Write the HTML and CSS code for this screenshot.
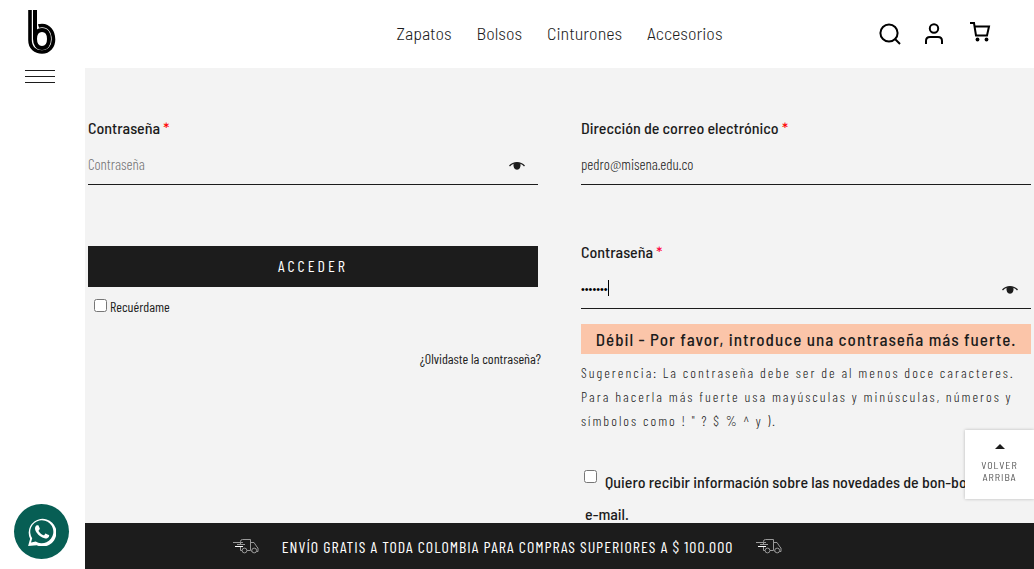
FILE: index.html
```html
<!DOCTYPE html>
<html lang="es">
<head>
<meta charset="utf-8">
<meta name="viewport" content="width=device-width, initial-scale=1">
<title>Mi cuenta</title>
<link rel="stylesheet" href="styles.css">
</head>
<body>
<svg class="defs" aria-hidden="true">
  <symbol id="eye" viewBox="0 0 16 10"><path d="M.5 5C4.500.5 11.500.5 15.500 5" fill="none" stroke="#1c1c1c" stroke-width="1.300"/><path d="M4.500 2.300Q8 1 11.500 2.300Q12 8.800 8 8.800T4.500 2.300Z" fill="#1c1c1c"/></symbol>
  <symbol id="truck" viewBox="0 0 26 16"><g fill="none" stroke="#999" stroke-width="1"><path d="M7.500 6V3.500Q7.500 1.500 9.500 1.500H17.500V12.500H14M7.500 8.500V12.500H9M17.500 4.500H21L24 9 25 10V13.500H23.500M18 13H19"/><circle cx="11.500" cy="12.500" r="2.400"/><circle cx="21.200" cy="12.500" r="2.400"/><path d="M0 4.500H10M4 6.500H12"/><path d="M2 8.500H10" stroke="#fff"/></g></symbol>
</svg>
<div class="page">
  <aside class="sidebar">
    <a class="logo" href="#" aria-label="Inicio">
      <svg width="28" height="46" viewBox="0 0 28 46"><path d="M2 1V31C2 39 7.500 43 14 43C21 43 25.500 37.500 25.500 30.500C25.500 22.500 21 16.500 14 16.500Q12 16.500 10.500 17" fill="none" stroke="#000" stroke-width="3.600"/><path d="M7 1V30C7 35.500 9.500 39 14 39C18.500 39 21 35.500 21 30C21 24.500 18.500 21 14 21C9.500 21 7 24.500 7 30" fill="none" stroke="#000" stroke-width="4"/></svg>
    </a>
    <button class="menu" type="button" aria-label="Menú"><span></span><span></span><span></span></button>
    <a class="whatsapp" href="#" aria-label="WhatsApp">
      <svg width="28" height="28" viewBox="0 0 24 24" fill="#fff"><path d="M.1 24l1.700-6.200A11.900 11.900 0 1 1 7.600 23.400zM6.600 20.200a9.900 9.900 0 1 0-3-2.900l-1 3.700zM17.500 14.400c-.3-.2-1.800-.9-2-1-.3-.1-.5-.1-.7.200l-.9 1.100c-.2.200-.4.200-.7.100-.3-.2-1.300-.5-2.400-1.500-.9-.8-1.500-1.800-1.700-2.100-.1-.3 0-.4.200-.6l.8-1.100c.1-.2 0-.4 0-.5L9.200 6.800c-.3-.7-.6-.6-.8-.6h-.6c-.2 0-.5.100-.8.400-.3.300-1 1-1 2.500s1.100 2.900 1.200 3.100c.1.200 2.100 3.200 5.100 4.500 3 1.200 3 .8 3.600.8.600-.1 1.800-.7 2-1.400.3-.7.300-1.300.2-1.400 0-.1-.3-.2-.6-.3z"/></svg>
    </a>
  </aside>
  <div class="shell">
    <header class="header">
      <span></span>
      <nav class="nav">
        <a href="#">Zapatos</a><a href="#">Bolsos</a><a href="#">Cinturones</a><a href="#">Accesorios</a>
      </nav>
      <div class="tools">
        <button type="button" aria-label="Buscar"><svg width="22" height="22" viewBox="0 0 22 22"><circle cx="10" cy="10" r="8.600"/><path d="M16 16l5 5"/></svg></button>
        <button type="button" aria-label="Mi cuenta"><svg width="22" height="22" viewBox="0 0 22 22"><circle cx="10" cy="5.500" r="4.200"/><path d="M2 21V18Q2 14 6 14H14Q18 14 18 18V21"/></svg></button>
        <button class="cart" type="button" aria-label="Carrito"><svg width="22" height="22" viewBox="0 0 22 22"><path d="M1 2H5L7 14.500H18L20 5.500H5.600"/><g fill="#000" stroke="none"><circle cx="8.500" cy="18.500" r="1.900"/><circle cx="17.500" cy="18.500" r="1.900"/></g></svg></button>
      </div>
    </header>
    <main class="content">
      <form class="login">
        <div class="field">
          <label for="login-pass">Contraseña <span class="req">*</span></label>
          <div class="control"><input id="login-pass" type="password" placeholder="Contraseña"><button class="eye" type="button" aria-label="Mostrar contraseña"><svg width="16" height="10"><use href="#eye"/></svg></button></div>
        </div>
        <button class="submit" type="button">ACCEDER</button>
        <label class="remember"><input type="checkbox">Recuérdame</label>
        <a class="forgot" href="#">¿Olvidaste la contraseña?</a>
      </form>
      <form class="register">
        <div class="field">
          <label for="email">Dirección de correo electrónico <span class="req">*</span></label>
          <div class="control"><input id="email" type="email" value="pedro@misena.edu.co"></div>
        </div>
        <div class="field second">
          <label for="reg-pass">Contraseña <span class="req pink">*</span></label>
          <div class="control"><input id="reg-pass" class="secret" type="password" value="1234567"><span class="caret"></span><button class="eye" type="button" aria-label="Mostrar contraseña"><svg width="16" height="10"><use href="#eye"/></svg></button></div>
        </div>
        <div class="strength">Débil - Por favor, introduce una contraseña más fuerte.</div>
        <p class="hint">Sugerencia: La contraseña debe ser de al menos doce caracteres. Para hacerla más fuerte usa mayúsculas y minúsculas, números y símbolos como ! " ? $ % ^ y ).</p>
        <label class="news"><input type="checkbox">Quiero recibir información sobre las novedades de bon-bonite por e-mail.</label>
      </form>
    </main>
    <footer class="promo">
      <svg width="26" height="16"><use href="#truck"/></svg>
      <span>ENVÍO GRATIS A TODA COLOMBIA PARA COMPRAS SUPERIORES A $ 100.000</span>
      <svg width="26" height="16"><use href="#truck"/></svg>
    </footer>
  </div>
</div>
<a class="top" href="#"><svg width="10" height="5" viewBox="0 0 10 5"><path d="M0 5L5 0L10 5Z" fill="#1c1c1c"/></svg><span>VOLVER ARRIBA</span></a>
</body>
</html>
```
FILE: styles.css
```css
* { box-sizing: border-box; }
body {
  margin: 0;
  background: #fff;
  color: #1c1c1c;
  font-family: "Barlow Condensed", "Barlow Semi Condensed", Roboto, sans-serif;
  font-size: 14px;
}
a { color: inherit; text-decoration: none; }
button { padding: 0; border: 0; background: none; font: inherit; color: inherit; }
svg { display: block; }
.defs { position: absolute; width: 0; height: 0; }

.page { display: grid; grid-template-columns: 85px minmax(0, 1fr); height: 100vh; }
.sidebar { display: flex; flex-direction: column; align-items: center; padding: 9px 2px 10px 0; }
.menu { display: flex; flex-direction: column; gap: 5px; width: 30px; margin: 15px 3px 0 0; }
.menu span { height: 1px; background: #1c1c1c; }
.whatsapp {
  display: grid; place-items: center;
  width: 55px; height: 55px; margin-top: auto;
  border-radius: 50%; background: #075e54;
}

.shell { display: flex; flex-direction: column; min-width: 0; min-height: 0; }
.header {
  display: grid; grid-template-columns: 1fr auto 1fr; align-items: center;
  flex: none; height: 68px;
}
.nav, .field label, .strength, .news, .top { font-family: "Barlow Semi Condensed", Roboto, sans-serif; }
.nav { display: flex; gap: 25px; padding-bottom: 2px; font-size: 18px; font-weight: 300; }
.tools { display: flex; justify-content: flex-end; gap: 23px; padding-right: 43px; }
.tools svg { fill: none; stroke: #000; stroke-width: 2; }
.tools .cart { padding-bottom: 4px; }

.content {
  display: grid; grid-template-columns: 1fr 1fr; gap: 43px;
  flex: 1; min-height: 0; overflow: hidden;
  padding: 44px 3px 0; background: #f3f3f3;
}
.login, .register { display: flex; flex-direction: column; min-width: 0; }
.field label { display: block; font-size: 16px; font-weight: 500; line-height: 32px; }
.req { color: #f00; }
.pink { color: #ff0040; }
.control { position: relative; }
.control input {
  display: block; width: 100%; height: 41px; padding: 0;
  border: 0; border-bottom: 1px solid #1c1c1c; border-radius: 0; outline: 0;
  background: transparent; color: #1c1c1c; font: inherit; font-size: 15px; font-weight: 300;
}
.control input::placeholder { color: #757575; }
.control .secret { color: #000; font-size: 13px; }
.eye { position: absolute; right: 13px; top: 17px; }
.caret { position: absolute; left: 27px; top: 12px; width: 1px; height: 16px; background: #000; }
.submit {
  height: 41px; margin-top: 61px; padding-bottom: 2px;
  background: #1c1c1c; color: #fff; font-size: 16px; letter-spacing: 3px;
}
.remember { display: flex; align-items: center; gap: 3px; margin: 10px 0 0 6px; line-height: 20px; }
.remember input { margin: 0 0 4px; }
.forgot { align-self: flex-end; margin: 32px -3px 0 0; line-height: 20px; }
.second { margin-top: 51px; }
.strength {
  margin-top: 15px; background: #fbc5a9; text-align: center;
  font-size: 17px; font-weight: 500; letter-spacing: 1px; line-height: 30px;
}
.hint { margin: 7px 0 33px; font-weight: 300; letter-spacing: 2px; line-height: 24px; }
.news { padding-left: 4px; font-size: 16px; font-weight: 500; line-height: 32px; }
.news input { margin: 0 8px 0 -1px; vertical-align: 5px; }

.promo {
  display: flex; align-items: center; justify-content: center; gap: 23px;
  flex: none; height: 46px; padding-right: 104px;
  background: #1c1c1c; color: #fff;
  font-size: 16px; letter-spacing: 1px; white-space: nowrap;
}
.promo svg { flex: none; }
.top {
  position: fixed; right: 0; bottom: 70px;
  display: flex; flex-direction: column; align-items: center; gap: 10px;
  width: 69px; padding: 14px 10px 16px;
  background: #fff; box-shadow: 0 0 3px rgba(0, 0, 0, .25);
  color: #555; font-size: 10px; letter-spacing: 1px; line-height: 12px; text-align: center;
}
```
